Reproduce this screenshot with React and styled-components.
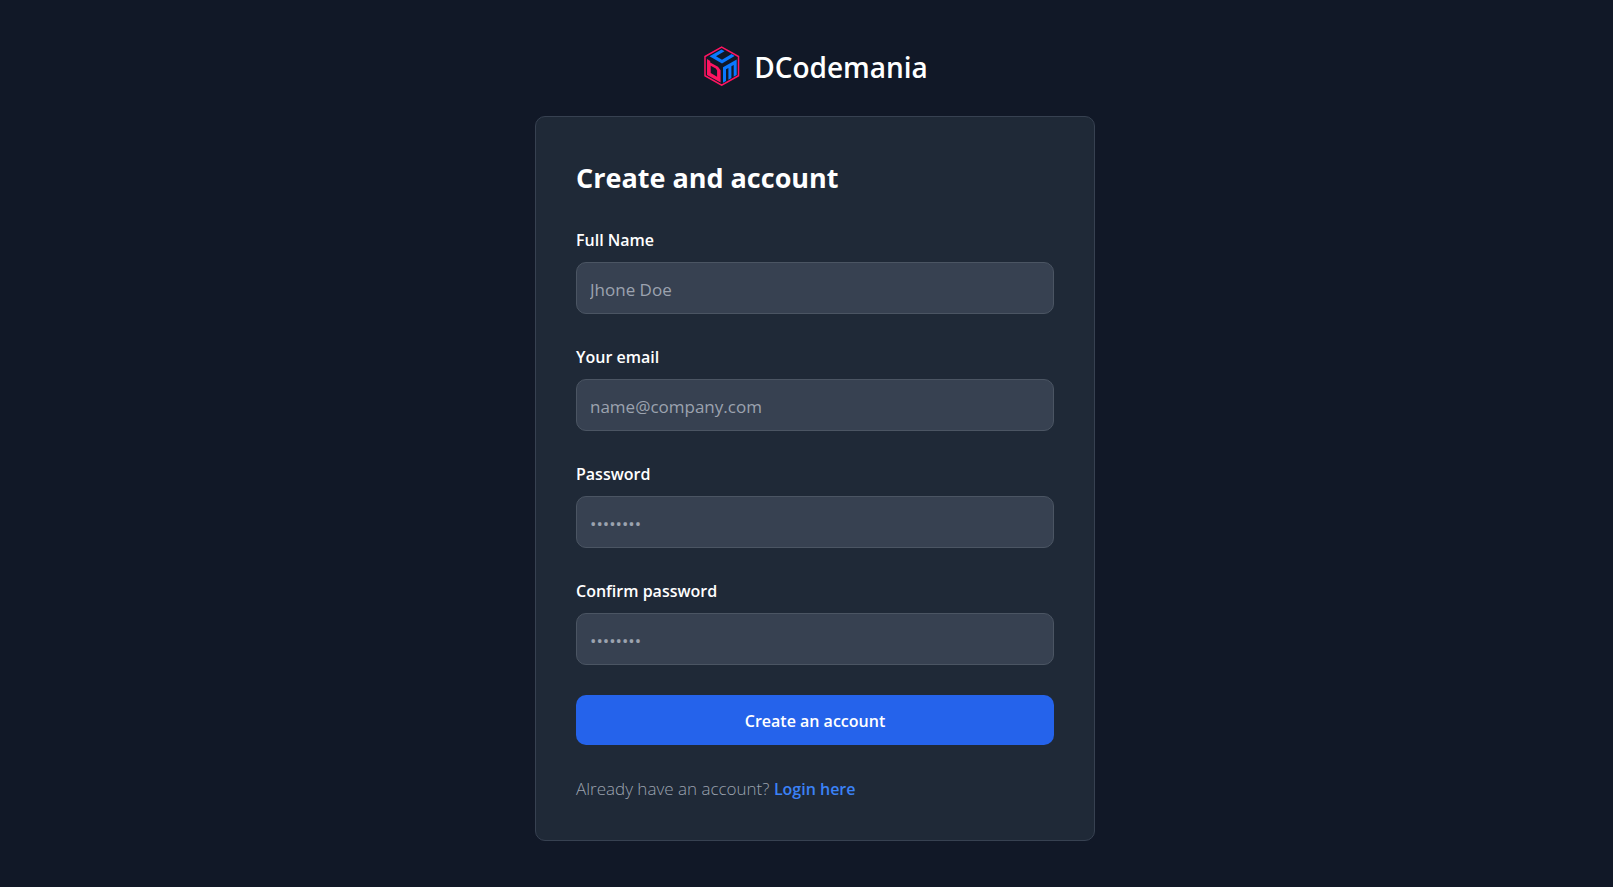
import styled, { createGlobalStyle } from 'styled-components';

const GlobalStyle = createGlobalStyle`
	*, *::before, *::after {
		box-sizing: border-box;
	}

	body {
		margin: 0;
		background: #111827;
		color: #fff;
		font-family: 'Segoe UI', 'Open Sans', 'Noto Sans', sans-serif;
		font-size: 17px;
		line-height: 27px;
	}
`;

const Page = styled.main`
	display: flex;
	flex-direction: column;
	align-items: center;
	justify-content: center;
	min-height: 100vh;
	padding: 40px 0 40px 17px;
`;

const Brand = styled.a`
	display: flex;
	align-items: flex-start;
	gap: 12px;
	margin-bottom: 28px;
	color: #fff;
	font-size: 28px;
	font-weight: 600;
	line-height: 42px;
	text-decoration: none;
`;

const Card = styled.section`
	width: 100%;
	max-width: 560px;
	padding: 40px 40px 38px;
	border: 1px solid #374151;
	border-radius: 10px;
	background: #1f2937;
`;

const Title = styled.h1`
	margin: 0 0 28px;
	font-size: 27px;
	font-weight: 700;
	line-height: 42px;
`;

const Form = styled.form`
	display: flex;
	flex-direction: column;
	gap: 30px;
`;

const Field = styled.div`
	display: flex;
	flex-direction: column;
	gap: 8px;
`;

const Label = styled.label`
	font-size: 16px;
	font-weight: 600;
`;

const Input = styled.input`
	width: 100%;
	height: 52px;
	padding: 3px 13px 0;
	border: 1px solid #4b5563;
	border-radius: 10px;
	background: #374151;
	color: #fff;
	font: inherit;

	&::placeholder {
		color: #9ca3af;
		opacity: 1;
	}
`;

const SubmitButton = styled.button`
	height: 50px;
	padding: 3px 20px 0;
	border: 0;
	border-radius: 10px;
	background: #2563eb;
	color: #fff;
	font: inherit;
	font-size: 16px;
	font-weight: 600;
	cursor: pointer;

	&:hover {
		background: #1d4ed8;
	}
`;

const LoginNote = styled.p`
	margin: 0;
	color: #9ca3af;
	font-weight: 300;
`;

const LoginLink = styled.a`
	color: #3b82f6;
	font-size: 16px;
	font-weight: 600;
	line-height: 1;
	text-decoration: none;

	&:hover {
		text-decoration: underline;
	}
`;

const Logo = () => (
	<svg width="40" height="40" viewBox="0 0 40 40" fill="none" aria-hidden="true">
		<path d="M19.700 1.200 36.500 10.500v19.200L19.700 39.200 3 29.700V10.500z" stroke="#ff1461" strokeWidth="1.5" />
		<path d="M19.500 3.500 22.500 5.300 14 10.300l6 3.400L29.600 8l3 1.900L20 17.500 7.500 10.300z" fill="#0a78ff" />
		<path
			d="M5 13l3.200 1.900v1.500L16 20.700l2.600 3.500v12.400L5 28.900zM8.700 19.800v7.200l6.400 3.700v-6.200l-1.300-1.900z"
			fill="#ff1461"
			fillRule="evenodd"
		/>
		<path
			d="M21 21.200 34.700 13.400V28.900l-3 1.800V18.900l-2.300 1.300v11.700l-3 1.800V22l-2.400 1.300v11.700L21 36.700z"
			fill="#0a78ff"
		/>
	</svg>
);

const fields = [
	{ id: 'name', label: 'Full Name', type: 'text', placeholder: 'Jhone Doe' },
	{ id: 'email', label: 'Your email', type: 'email', placeholder: 'name@company.com' },
	{ id: 'password', label: 'Password', type: 'password', placeholder: '••••••••' },
	{ id: 'confirm-password', label: 'Confirm password', type: 'password', placeholder: '••••••••' },
];

const RegisterForm = () => (
	<Form onSubmit={(event) => event.preventDefault()}>
		{fields.map(({ id, label, type, placeholder }) => (
			<Field key={id}>
				<Label htmlFor={id}>{label}</Label>
				<Input id={id} name={id} type={type} placeholder={placeholder} />
			</Field>
		))}
		<SubmitButton type="submit">Create an account</SubmitButton>
		<LoginNote>
			Already have an account? <LoginLink href="#login">Login here</LoginLink>
		</LoginNote>
	</Form>
);

const App = () => (
	<>
		<GlobalStyle />
		<Page>
			<Brand href="#home">
				<Logo />
				DCodemania
			</Brand>
			<Card>
				<Title>Create and account</Title>
				<RegisterForm />
			</Card>
		</Page>
	</>
);

export default App;
